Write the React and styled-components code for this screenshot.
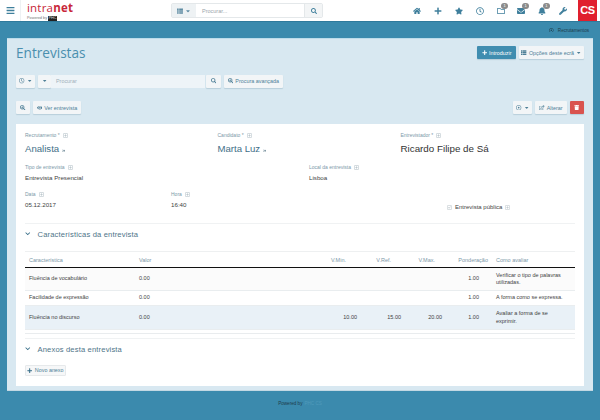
import React from "react";
import styled, { createGlobalStyle } from "styled-components";
import {
  FaBars, FaHome, FaPlus, FaStar, FaRegClock, FaRegFolder, FaEnvelope, FaBell, FaWrench,
  FaSearch, FaSearchPlus, FaEye, FaThList, FaTrash, FaChevronDown, FaCaretDown, FaRegEdit,
  FaRegPlusSquare, FaAngleDoubleRight, FaRegCheckSquare, FaRegDotCircle,
} from "react-icons/fa";

const GlobalStyle = createGlobalStyle`
  html, body { margin: 0; padding: 0; background: #3b8aad; }
  body { font-family: "Liberation Sans", Arial, sans-serif; width: 600px; height: 420px; overflow: hidden; }
  * { box-sizing: border-box; }
`;

const TopBar = styled.header`
  height: 22px;
  background: #fff;
  display: flex;
  align-items: center;
  border-bottom: 1px solid #2f7a9c;
`;
const Burger = styled.div`
  width: 21px;
  height: 21px;
  display: flex;
  align-items: center;
  justify-content: center;
  color: #3f7f9c;
  font-size: 9px;
  border-right: 1px solid #eef1f3;
`;
const Logo = styled.div`
  width: 150px;
  padding-left: 6px;
  height: 21px;
`;
const LogoName = styled.div`
  font-family: "Open Sans", sans-serif;
  font-size: 11.5px;
  line-height: 16px;
  letter-spacing: 0.2px;
  color: #c8283a;
  b { font-weight: 700; }
`;
const LogoSub = styled.div`
  display: flex;
  align-items: center;
  gap: 1px;
  font-size: 3.8px;
  line-height: 5px;
  color: #777;
  b { background: #222; color: #ddd; font-weight: 400; padding: 0 0.5px; }
`;
const TopSearch = styled.div`
  display: flex;
  width: 152px;
  height: 15px;
  border: 1px solid #e4e8ea;
  border-radius: 2px;
  align-items: stretch;
`;
const SearchMode = styled.div`
  width: 24px;
  background: #eef2f4;
  color: #5f8ca3;
  display: flex;
  align-items: center;
  justify-content: center;
  gap: 2px;
  font-size: 6px;
`;
const SearchInput = styled.div`
  flex: 1;
  font-size: 5.5px;
  color: #9aa5ab;
  padding-left: 6px;
  display: flex;
  align-items: center;
`;
const SearchBtn = styled.div`
  width: 18px;
  background: #f3f5f6;
  border-left: 1px solid #e4e8ea;
  color: #3f7f9c;
  font-size: 6px;
  display: flex;
  align-items: center;
  justify-content: center;
`;
const TopIcons = styled.nav`
  margin-left: auto;
  display: flex;
  align-items: center;
  height: 21px;
`;
const TopIcon = styled.div`
  position: relative;
  width: 20.8px;
  display: flex;
  justify-content: center;
  color: #3f7f9c;
  font-size: 8px;
`;
const Badge = styled.span`
  position: absolute;
  top: -4px;
  left: 11px;
  width: 7px;
  height: 6px;
  border-radius: 3px;
  background: #8b8b8b;
  color: #fff;
  font-size: 4px;
  line-height: 6px;
  text-align: center;
`;
const CsLogo = styled.div`
  width: 19px;
  height: 21px;
  margin: 0 3px 0 4.6px;
  background: #e0202e;
  color: #fff;
  font-size: 11px;
  font-weight: 700;
  line-height: 20px;
  text-align: center;
  letter-spacing: -0.5px;
`;

const SubBar = styled.div`
  height: 16px;
  padding-right: 11px;
  display: flex;
  align-items: center;
  justify-content: flex-end;
  gap: 4px;
  font-size: 4.6px;
  color: #1d3c4c;
`;

const Panel = styled.main`
  margin: 0 7px;
  height: 353px;
  background: #d8e8f1;
  border-top: 1px solid #bcdcea;
  border-bottom: 1px solid #c3d8e3;
  padding: 0 9px 4px;
  display: flex;
  flex-direction: column;
`;
const TitleRow = styled.div`
  height: 26px;
  padding-top: 1px;
  display: flex;
  align-items: center;
  justify-content: space-between;
`;
const Title = styled.h1`
  margin: 0;
  font-family: "Open Sans", sans-serif;
  font-weight: 400;
  font-size: 13.6px;
  color: #4a8fae;
`;
const Group = styled.div`
  display: flex;
  align-items: center;
  gap: 3px;
`;
const Btn = styled.div`
  height: 13px;
  width: ${(p) => p.$w}px;
  display: flex;
  align-items: center;
  justify-content: center;
  gap: 2px;
  background: ${(p) => (p.$tone === "blue" ? "#3f8db0" : p.$tone === "red" ? "#d9534f" : "#f2f5f7")};
  color: ${(p) => (p.$tone ? "#fff" : "#4e7f97")};
  border-radius: 1px;
  box-shadow: 0 1px 1px rgba(90, 130, 150, 0.25);
  font-size: 5.4px;
  white-space: nowrap;
  svg { flex-shrink: 0; }
`;
const FilterRow = styled.div`
  margin-top: 9px;
  height: 14px;
  display: flex;
  align-items: center;
  gap: 3px;
`;
const FilterInput = styled.div`
  width: 154px;
  height: 13px;
  margin: 0 -2px 0 -3px;
  background: #eef4f8;
  color: #9fb0ba;
  font-size: 5.4px;
  padding-left: 5px;
  display: flex;
  align-items: center;
`;
const ActionRow = styled.div`
  margin-top: 13px;
  height: 13px;
  display: flex;
  justify-content: space-between;
`;

const Card = styled.section`
  margin-top: 10px;
  flex: 1;
  background: #fff;
  padding: 7px 9px 0;
`;
const TopFields = styled.div`
  display: grid;
  grid-template-columns: 192.5px 183px 1fr;
`;
const Fields = styled.div`
  display: grid;
  grid-template-columns: ${(p) => p.$cols};
  margin-top: ${(p) => p.$mt}px;
`;
const Label = styled.div`
  display: flex;
  align-items: center;
  gap: 3px;
  font-size: 5px;
  line-height: 8px;
  color: #7c98a8;
  svg { color: #a9b8c0; font-size: 5px; }
`;
const BigValue = styled.div`
  font-size: ${(p) => (p.$dark ? 9.8 : 9.6)}px;
  line-height: 13px;
  margin-top: 3px;
  color: ${(p) => (p.$dark ? "#333" : "#3f7088")};
  display: flex;
  align-items: center;
  gap: 3px;
  svg { font-size: 3.5px; margin-top: 4px; color: #3a5f72; }
`;
const Value = styled.div`
  font-size: 6.2px;
  line-height: 8px;
  margin-top: 3px;
  color: #3f3f3f;
`;
const PublicCheck = styled.div`
  display: flex;
  align-items: center;
  gap: 3px;
  font-size: 6px;
  color: #444;
  padding: 14px 0 0 138px;
  svg { font-size: 5px; color: #b5bfc5; }
`;
const SectionHead = styled.div`
  margin-top: ${(p) => p.$mt}px;
  border-top: 1px solid #f0f2f3;
  height: 21px;
  display: flex;
  align-items: center;
  gap: 7px;
  font-size: 7.6px;
  letter-spacing: 0.15px;
  color: #4e7488;
  svg { font-size: 5.5px; color: #336b86; }
`;
const TableWrap = styled.div`
  margin-top: 7px;
  padding-bottom: 3px;
  border-bottom: 1px solid #e9ecee;
`;
const Table = styled.table`
  width: 100%;
  border-collapse: collapse;
  table-layout: fixed;
  font-size: 5.5px;
`;
const Th = styled.th`
  height: 16px;
  font-weight: 400;
  color: #7c98a8;
  text-align: ${(p) => p.$align ?? "left"};
  padding: 0 ${(p) => p.$pr ?? 4}px 0 4px;
  border-top: 1px solid #eef0f1;
  border-bottom: 1px solid #111;
`;
const Tr = styled.tr`
  background: ${(p) => p.$bg};
  border-bottom: 1px solid #e9edef;
`;
const Td = styled.td`
  height: ${(p) => p.$h}px;
  color: #3f3f3f;
  padding: 0 ${(p) => p.$pr ?? 4}px 0 4px;
  line-height: 7.5px;
  text-align: ${(p) => p.$align ?? "left"};
`;
const AddBtn = styled(Btn)`
  display: inline-flex;
  height: 11px;
  margin-top: 2px;
  background: #f6f7f8;
  border: 1px solid #e6e9eb;
  box-shadow: none;
  svg { color: #336b86; }
`;
const Footer = styled.footer`
  height: 24px;
  display: flex;
  align-items: center;
  justify-content: center;
  gap: 2px;
  font-size: 4.6px;
  color: #1d3c4c;
  span { color: #4f9abb; }
`;

const rows = [
  { name: "Fluência de vocabulário", how: "Verificar o tipo de palavras utilizadas.", h: 23, bg: "#fbfbfb" },
  { name: "Facilidade de expressão", how: "A forma como se expressa.", h: 15, bg: "#fff" },
  { name: "Fluência no discurso", min: "10.00", ref: "15.00", max: "20.00", how: "Avaliar a forma de se exprimir.", h: 24, bg: "#e9f1f7" },
];

export default function App() {
  return (
    <>
      <GlobalStyle />
      <TopBar>
        <Burger><FaBars /></Burger>
        <Logo>
          <LogoName>intra<b>net</b></LogoName>
          <LogoSub>Powered by <b>PHC</b></LogoSub>
        </Logo>
        <TopSearch>
          <SearchMode><FaThList /><FaCaretDown /></SearchMode>
          <SearchInput>Procurar...</SearchInput>
          <SearchBtn><FaSearch /></SearchBtn>
        </TopSearch>
        <TopIcons>
          <TopIcon><FaHome /></TopIcon>
          <TopIcon><FaPlus /></TopIcon>
          <TopIcon><FaStar /></TopIcon>
          <TopIcon><FaRegClock /></TopIcon>
          <TopIcon><FaRegFolder /><Badge>1</Badge></TopIcon>
          <TopIcon><FaEnvelope /><Badge>1</Badge></TopIcon>
          <TopIcon><FaBell /><Badge>1</Badge></TopIcon>
          <TopIcon><FaWrench /></TopIcon>
          <CsLogo>CS</CsLogo>
        </TopIcons>
      </TopBar>
      <SubBar><FaRegDotCircle /> Recrutamentos</SubBar>
      <Panel>
        <TitleRow>
          <Title>Entrevistas</Title>
          <Group>
            <Btn $tone="blue" $w={39}><FaPlus /> Introduzir</Btn>
            <Btn $w={65}><FaThList /> Opções deste ecrã <FaCaretDown /></Btn>
          </Group>
        </TitleRow>
        <FilterRow>
          <Btn $w={19}><FaRegClock /><FaCaretDown /></Btn>
          <Btn $w={13}><FaCaretDown /></Btn>
          <FilterInput>Procurar</FilterInput>
          <Btn $w={15}><FaSearch /></Btn>
          <Btn $w={59}><FaSearchPlus /> Procura avançada</Btn>
        </FilterRow>
        <ActionRow>
          <Group>
            <Btn $w={14}><FaSearchPlus /></Btn>
            <Btn $w={48}><FaEye /> Ver entrevista</Btn>
          </Group>
          <Group>
            <Btn $w={19}><FaRegDotCircle /><FaCaretDown /></Btn>
            <Btn $w={32}><FaRegEdit /> Alterar</Btn>
            <Btn $tone="red" $w={14}><FaTrash /></Btn>
          </Group>
        </ActionRow>
        <Card>
          <TopFields>
            <div>
              <Label>Recrutamento * <FaRegPlusSquare /></Label>
              <BigValue>Analista <FaAngleDoubleRight /></BigValue>
            </div>
            <div>
              <Label>Candidato * <FaRegPlusSquare /></Label>
              <BigValue>Marta Luz <FaAngleDoubleRight /></BigValue>
            </div>
            <div>
              <Label>Entrevistador * <FaRegPlusSquare /></Label>
              <BigValue $dark>Ricardo Filipe de Sá</BigValue>
            </div>
          </TopFields>
          <Fields $cols="284px 1fr" $mt={8}>
            <div>
              <Label>Tipo de entrevista <FaRegPlusSquare /></Label>
              <Value>Entrevista Presencial</Value>
            </div>
            <div>
              <Label>Local da entrevista <FaRegPlusSquare /></Label>
              <Value>Lisboa</Value>
            </div>
          </Fields>
          <Fields $cols="146px 138px 1fr" $mt={8}>
            <div>
              <Label>Data <FaRegPlusSquare /></Label>
              <Value>05.12.2017</Value>
            </div>
            <div>
              <Label>Hora <FaRegPlusSquare /></Label>
              <Value>16:40</Value>
            </div>
            <PublicCheck><FaRegCheckSquare /> Entrevista pública <FaRegPlusSquare /></PublicCheck>
          </Fields>
          <SectionHead $mt={13}><FaChevronDown /> Características da entrevista</SectionHead>
          <TableWrap>
            <Table>
              <colgroup>
                <col style={{ width: 110 }} />
                <col style={{ width: 135 }} />
                <col style={{ width: 91 }} />
                <col style={{ width: 44 }} />
                <col style={{ width: 41 }} />
                <col style={{ width: 46 }} />
                <col />
              </colgroup>
              <thead>
                <tr>
                  <Th>Característica</Th>
                  <Th>Valor</Th>
                  <Th $align="right" $pr={15}>V.Min.</Th>
                  <Th $align="right" $pr={14}>V.Ref.</Th>
                  <Th $align="right" $pr={11}>V.Max.</Th>
                  <Th $align="right">Ponderação</Th>
                  <Th>Como avaliar</Th>
                </tr>
              </thead>
              <tbody>
                {rows.map((r) => (
                  <Tr key={r.name} $bg={r.bg}>
                    <Td $h={r.h}>{r.name}</Td>
                    <Td>0.00</Td>
                    <Td $align="right">{r.min}</Td>
                    <Td $align="right">{r.ref}</Td>
                    <Td $align="right">{r.max}</Td>
                    <Td $align="right" $pr={13}>1.00</Td>
                    <Td $pr={9}>{r.how}</Td>
                  </Tr>
                ))}
              </tbody>
            </Table>
          </TableWrap>
          <SectionHead $mt={4}><FaChevronDown /> Anexos desta entrevista</SectionHead>
          <AddBtn $w={41}><FaPlus /> Novo anexo</AddBtn>
        </Card>
      </Panel>
      <Footer>Powered by <span>PHC CS</span></Footer>
    </>
  );
}
